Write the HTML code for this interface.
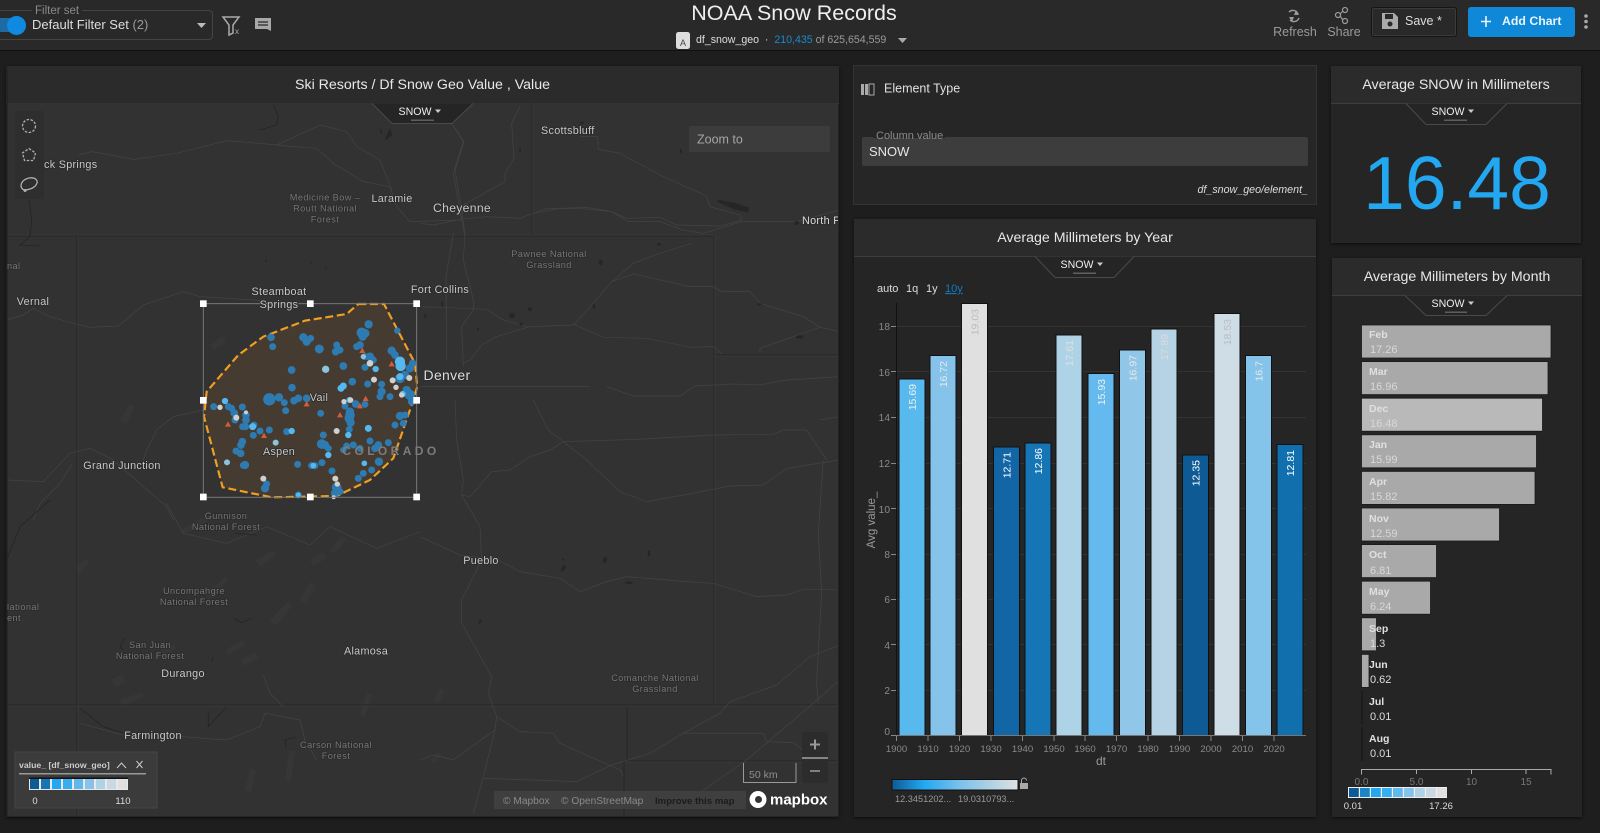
<!DOCTYPE html>
<html><head><meta charset="utf-8"><title>NOAA Snow Records</title>
<style>
html,body{margin:0;padding:0;width:1600px;height:833px;overflow:hidden;background:#1e1e1e;font-family:"Liberation Sans",sans-serif;color:#ddd}
#w{position:absolute;left:0;top:0;width:1600px;height:833px;overflow:hidden;filter:blur(.3px)}
.a{position:absolute}
.p{position:absolute;background:#252525;box-shadow:0 1px 3px rgba(0,0,0,.6)}
.t{position:absolute;left:0;right:0;top:0;height:37px;background:#2b2b2b;border-bottom:1px solid #3e3e3e;text-align:center;line-height:39px;font-size:14.2px;color:#e8e8e8}
svg{position:absolute;left:0;top:0}
svg text{font-family:"Liberation Sans",sans-serif}
.ml text{fill:#c8c8c8;font-size:10.8px;text-anchor:middle;dominant-baseline:central;paint-order:stroke;stroke:#2a2a2a;stroke-width:1.5px;letter-spacing:.3px}
.ml .g{fill:#767676;font-size:9.2px;letter-spacing:.4px}
.r{fill:none;stroke:#434343;stroke-width:2.2}
.w{fill:none;stroke:#232323;stroke-width:2.2}
.b{fill:#262626;stroke:none}
.bb line{stroke:#282828;stroke-width:1.2}
.ax{fill:#8a8a8a;font-size:10.2px}
.lb{font-size:10.5px;text-anchor:end}
.mo{font-size:10.5px;font-weight:bold;fill:#e0e0e0}
.mv{font-size:11px;fill:#ddd}
</style></head><body>
<div id="w">

<!-- header -->
<div class="a" style="left:0;top:0;width:1600px;height:50px;background:#292929;border-bottom:1px solid #111"></div>
<div class="a" style="left:-4px;top:10px;width:215px;height:28px;border:1px solid #444;border-radius:4px"></div>
<div class="a" style="left:32px;top:4px;padding:0 3px;background:#292929;font-size:11.5px;color:#8a8a8a;line-height:14px">Filter set</div>
<div class="a" style="left:32px;top:17px;font-size:13px;line-height:16px;color:#ddd;white-space:nowrap">Default Filter Set <span style="color:#9a9a9a">(2)</span></div>
<div class="a" style="left:0;top:18px;width:16px;height:14px;background:#1e6ba3"></div>
<div class="a" style="left:7px;top:16px;width:19px;height:19px;border-radius:50%;background:#0f8ae0"></div>
<div class="a" style="left:594px;top:0;width:400px;text-align:center;font-size:21.5px;line-height:27px;color:#eee">NOAA Snow Records</div>
<div class="a" style="left:696px;top:33px;font-size:10.6px;line-height:15px;color:#ddd;white-space:nowrap">df_snow_geo &nbsp;·&nbsp; <span style="color:#1a8ad0">210,435</span> <span style="color:#9a9a9a">of 625,654,559</span></div>
<div class="a" style="left:1273px;top:24px;width:44px;text-align:center;font-size:12.5px;line-height:16px;color:#999">Refresh</div>
<div class="a" style="left:1324px;top:24px;width:40px;text-align:center;font-size:12.5px;line-height:16px;color:#999">Share</div>
<div class="a" style="left:1371px;top:7px;width:84px;height:28px;border:1px solid #151515;border-radius:3px;box-shadow:0 0 0 1px #3a3a3a inset"></div>
<div class="a" style="left:1405px;top:13px;font-size:12.5px;line-height:16px;color:#ddd">Save *</div>
<div class="a" style="left:1468px;top:7px;width:107px;height:30px;border-radius:3px;background:#0f88d8"></div>
<div class="a" style="left:1502px;top:13px;font-size:12.3px;font-weight:bold;line-height:16px;color:#e8f4fc;white-space:nowrap">Add Chart</div>

<!-- panels -->
<div class="p" style="left:6px;top:66px;width:833px;height:751px"><div class="t">Ski Resorts / Df Snow Geo Value , Value</div></div>
<div class="p" style="left:854px;top:66px;width:462px;height:138px;background:#262626;box-shadow:0 0 0 1px #333"></div>
<div class="p" style="left:854px;top:219px;width:462px;height:598px"><div class="t">Average Millimeters by Year</div></div>
<div class="p" style="left:1331px;top:66px;width:250px;height:177px"><div class="t">Average SNOW in Millimeters</div></div>
<div class="p" style="left:1332px;top:258px;width:250px;height:559px"><div class="t">Average Millimeters by Month</div></div>

<svg width="1600" height="833" viewBox="0 0 1600 833">
<defs>
<clipPath id="mc"><rect x="7" y="103" width="831" height="713"/></clipPath>
<linearGradient id="lg" x1="0" x2="1" y1="0" y2="0"><stop offset="0" stop-color="#0e5a94"/><stop offset=".25" stop-color="#22a7f0"/><stop offset=".55" stop-color="#7fc2ea"/><stop offset="1" stop-color="#e0e0e0"/></linearGradient>
</defs>

<!-- header icons -->
<path d="M223 17H239L233 25V33L229 35V25Z" fill="none" stroke="#aaa" stroke-width="1.5"/>
<text x="235" y="34" font-size="8" fill="#aaa">x</text>
<path d="M255 18H271V31L267 29H255Z" fill="#a8a8a8"/><path d="M258 22H268M258 25H268" stroke="#292929" stroke-width="1.2"/>
<path d="M197 23H206L201.5 28Z" fill="#bbb"/>
<rect x="676" y="32" width="14" height="17" rx="2.5" fill="#ddd"/><text x="683" y="46" font-size="9" fill="#444" text-anchor="middle">A</text>
<path d="M898 38H907L902.5 43Z" fill="#aaa"/>
<path d="M1289 12A5.5 5.5 0 0 1 1298 14M1299 18A5.5 5.5 0 0 1 1290 20" fill="none" stroke="#999" stroke-width="1.5"/><path d="M1296 10L1299 15L1294 15ZM1292 22L1289 17L1294 17Z" fill="#999"/>
<circle cx="1338" cy="15" r="2.5" fill="none" stroke="#999" stroke-width="1.3"/><circle cx="1345" cy="10" r="2.5" fill="none" stroke="#999" stroke-width="1.3"/><circle cx="1345" cy="21" r="2.5" fill="none" stroke="#999" stroke-width="1.3"/><path d="M1340 14L1343 11M1340 16L1343 20" stroke="#999" stroke-width="1.2"/>
<path d="M1382 13H1394L1398 17V29H1382Z" fill="#aaa"/><rect x="1385" y="14" width="8" height="5" fill="#292929"/><circle cx="1390" cy="24" r="2.5" fill="#292929"/>
<path d="M1486 16V27M1481 21.500H1491" stroke="#eaf6ff" stroke-width="1.6"/>
<g fill="#aaa"><circle cx="1586" cy="16" r="1.800"/><circle cx="1586" cy="21.500" r="1.800"/><circle cx="1586" cy="27" r="1.800"/></g>

<!-- map -->
<g clip-path="url(#mc)">
<rect x="7" y="103" width="831" height="713" fill="#323232"/>
<!-- forest patches -->
<g fill="#363636">
<path d="M210 345l12-9 4 6-12 8zM120 420l10-16 5 3-9 17zM255 560l18-10 3 5-16 12zM270 620l18-18 4 4-16 20zM240 660l16-8 2 6-14 8zM300 600l10-18 6 4-10 18zM160 650l14-6 2 5-14 7zM310 560l14-8 3 6-14 8zM330 550l12-14 4 4-12 14zM110 680l12-6 4 8-10 5zM205 595l20-18 3 3-19 20zM180 530l25-14 3 5-25 14zM75 570l10-12 4 4-10 13zM120 700l22-8 2 5-22 9zM225 650l18-10 3 5-18 10zM360 715l7-22 5 2-7 22zM245 790l5-22 6 2-5 22zM285 780l4-30 6 1-4 30zM430 760l8-8 4 3-8 9zM434 700l6-12 5 3-6 12z"/>
</g>
<!-- borders -->
<g class="bb">
<line x1="7" y1="236" x2="714" y2="236"/><line x1="532" y1="103" x2="532" y2="236"/>
<line x1="77" y1="236" x2="77" y2="816"/><line x1="714" y1="236" x2="714" y2="705"/>
<line x1="7" y1="705" x2="838" y2="705"/><line x1="714" y1="355" x2="838" y2="355"/>
<line x1="627" y1="705" x2="627" y2="761"/><line x1="624" y1="761" x2="838" y2="761"/><line x1="624" y1="761" x2="624" y2="816"/>
</g>
<g stroke="#424242" stroke-width=".6">
<line x1="7" y1="235" x2="714" y2="235"/><line x1="533" y1="103" x2="533" y2="235"/><line x1="78" y1="236" x2="78" y2="816"/><line x1="715" y1="236" x2="715" y2="705"/><line x1="7" y1="706" x2="838" y2="706"/><line x1="714" y1="356" x2="838" y2="356"/><line x1="625" y1="762" x2="838" y2="762"/>
</g>
<!-- roads -->
<g transform="translate(0,0) scale(.3333)">
<polyline class="r" points="235,465 275,455 400,478 530,460 680,422 800,432 880,440 950,445 1000,490 1090,545 1170,560 1190,620 1230,665 1385,660"/>
<polyline class="r" points="830,435 960,375 1040,395 1070,440 1140,480 1175,570"/>
<polyline class="r" points="1355,370 1390,425 1360,520 1385,660 1395,710"/>
<polyline class="w" points="820,315 835,350 830,375 780,390"/><polyline class="w" points="88,600 95,660 90,710 60,735 120,738"/>
<path class="b" d="M1140 380l8 20-6 2zM1170 385l8 20-20 15-2-6z"/>
</g>
<g transform="translate(420,100) scale(.3333)">
<polyline class="r" points="300,20 275,70 282,175 255,220 255,245 130,315 125,355"/>
<polyline class="r" points="95,70 132,125 105,210 120,300 135,400 130,480 160,600 160,630 125,680 130,800"/>
<polyline class="r" points="0,370 40,375 125,358 200,350 300,355 380,325 480,325 575,335 625,365 720,365 790,390 850,400 965,365 1130,365 1260,330"/>
<polyline class="r" points="340,340 420,325 500,322 575,335 620,355 720,352 770,375 900,378 965,360"/>
<polyline class="r" points="480,110 533,110 535,148 600,160 730,230 860,288 870,320 960,345 965,365"/>
<polyline class="r" points="100,400 78,530 80,780"/>
<polyline class="r" points="815,430 720,460 640,490 575,545 520,610 460,675 330,680 230,710 185,735 150,780 130,790"/>
<polyline class="r" points="575,545 640,522 810,560 880,560 905,575 990,575 1020,610 1150,650 1200,682 1260,695"/>
<polyline class="r" points="460,672 550,712 680,715 810,742 880,740 905,762"/>
<polyline class="r" points="1020,760 1020,745 1200,682"/>
<polyline class="r" points="0,620 130,625 200,628 250,660 320,680"/>
<polyline class="r" points="0,860 510,860"/>
<polyline class="r" points="560,860 640,888 780,888 825,858 940,852 1020,855 1100,840 1260,830"/>
<path class="b" d="M892 298l50 10 45 15-2 14-40-8-50-22z"/>
<g class="b"><ellipse cx="486" cy="68" rx="6" ry="4"/><ellipse cx="783" cy="153" rx="3" ry="7"/><ellipse cx="300" cy="150" rx="3" ry="6"/><ellipse cx="717" cy="433" rx="6" ry="4"/><ellipse cx="542" cy="487" rx="6" ry="8"/><ellipse cx="522" cy="618" rx="4" ry="8"/><ellipse cx="276" cy="647" rx="9" ry="8"/><ellipse cx="330" cy="628" rx="6" ry="6"/><ellipse cx="304" cy="672" rx="6" ry="4"/><ellipse cx="174" cy="687" rx="3" ry="5"/><ellipse cx="1139" cy="711" rx="12" ry="5"/><ellipse cx="1018" cy="613" rx="8" ry="3"/><ellipse cx="1130" cy="369" rx="7" ry="6"/><ellipse cx="67" cy="612" rx="3" ry="8"/><ellipse cx="16" cy="648" rx="3" ry="7"/></g>
</g>
<g transform="translate(420,400) scale(.3333)">
<polyline class="r" points="340,0 385,90 430,125 650,118 880,105 1060,103 1090,90 1160,90 1220,180"/>
<polyline class="r" points="430,125 390,150 330,170 270,210 215,215 150,290 125,285"/>
<polyline class="r" points="430,125 500,180 600,275 680,305 790,285 930,258 1030,255 1100,205 1260,180"/>
<polyline class="r" points="0,410 120,465 235,480 300,515 420,535 480,575 560,545 620,530 800,545 880,550 1010,590 1100,585 1150,568 1260,570"/>
<polyline class="r" points="105,0 110,120 130,240 125,285 180,380 185,480 125,600 125,670 215,830 205,880 230,950 225,990 190,1130 160,1240"/>
<polyline class="r" points="1200,60 1260,50"/>
<polyline class="r" points="1260,735 1170,770 1070,855 930,905 900,940 790,1000 690,1060 575,1095 470,1145 190,1135"/>
<polyline class="r" points="230,950 300,995 400,1000 420,1030 600,1110 610,1130"/>
<polyline class="r" points="1210,180 1195,400 1205,580 1190,850 1195,910"/>
<polyline class="r" points="1260,840 1180,910 980,1080 780,1220"/>
<polyline class="r" points="790,1000 1030,1000 1040,1025 1120,1028 1160,1060"/>
<polyline class="r" points="225,990 100,1080 40,1065 0,1080"/>
<g class="b"><ellipse cx="430" cy="505" rx="5" ry="11" transform="rotate(30 430 505)"/><ellipse cx="429" cy="479" rx="3" ry="3"/><ellipse cx="555" cy="480" rx="6" ry="10" transform="rotate(20 555 480)"/><ellipse cx="627" cy="548" rx="12" ry="4"/><ellipse cx="687" cy="460" rx="4" ry="10"/><ellipse cx="180" cy="665" rx="3" ry="7" transform="rotate(30 180 665)"/></g>
</g>
<g transform="translate(0,220) scale(.3333)">
<polyline class="r" points="20,300 70,285 100,265 150,290 220,310 270,322 355,318 430,255 550,215 600,230 760,240 900,250"/>
<polyline class="r" points="20,780 130,785 210,700 270,685 340,720 430,800 500,860 520,900"/>
<polyline class="r" points="610,570 520,590 470,630 440,690 430,720"/>
<polyline class="r" points="215,735 180,790 120,850 100,900"/>
<g class="b"><ellipse cx="798" cy="122" rx="3" ry="3"/><ellipse cx="935" cy="128" rx="3" ry="3"/><ellipse cx="977" cy="145" rx="3" ry="2"/></g>
</g>
<g transform="translate(0,500) scale(.3333)">
<polyline class="r" points="500,10 550,100 680,130 800,80 930,135 990,80 1130,145 1260,95"/>
<polyline class="r" points="240,670 370,705"/>
<polyline class="r" points="545,710 680,720 780,680 795,640 900,660 915,720 950,780"/>
<polyline class="r" points="790,525 810,580 850,620"/>
<polyline class="w" points="20,180 60,80 150,0"/><polyline class="w" points="240,625 310,680 370,700"/><polyline class="w" points="625,635 625,680 680,620"/><polyline class="w" points="700,355 725,368 755,355"/><polyline class="w" points="860,745 855,720 885,712"/><polyline class="w" points="705,100 770,105"/><polyline class="w" points="375,415 360,440 370,450"/><polyline class="w" points="640,470 635,485"/>
</g>

<!-- selection -->
<g transform="translate(180,280) scale(.3333)">
<polygon points="535,72 612,72 705,250 712,320 695,375 640,535 570,600 470,648 275,652 128,622 72,410 80,335 175,225 250,170 375,122 500,102" fill="#453b31" stroke="#f0a020" stroke-width="6.500" stroke-dasharray="24 11"/>
<g fill="#2d7fb9" stroke="#2d7fb9" stroke-width="5" opacity=".95">
<circle cx="566" cy="133" r="10"/><circle cx="545" cy="158" r="13"/><circle cx="555" cy="160" r="11"/><circle cx="548" cy="170" r="10"/><circle cx="540" cy="195" r="9"/><circle cx="530" cy="200" r="8"/><circle cx="273" cy="172" r="9"/><circle cx="278" cy="200" r="8"/><circle cx="370" cy="172" r="10"/><circle cx="380" cy="185" r="10"/><circle cx="392" cy="175" r="8"/><circle cx="418" cy="207" r="11"/><circle cx="470" cy="195" r="8"/><circle cx="467" cy="215" r="9"/><circle cx="480" cy="210" r="8"/><circle cx="335" cy="270" r="9"/><circle cx="336" cy="323" r="9"/><circle cx="268" cy="358" r="16"/><circle cx="297" cy="352" r="10"/><circle cx="313" cy="368" r="8"/><circle cx="317" cy="392" r="8"/><circle cx="342" cy="362" r="9"/><circle cx="355" cy="355" r="9"/><circle cx="380" cy="355" r="9"/><circle cx="422" cy="400" r="8"/><circle cx="490" cy="258" r="9"/><circle cx="517" cy="305" r="9"/><circle cx="563" cy="312" r="8"/><circle cx="555" cy="262" r="8"/><circle cx="605" cy="313" r="8"/><circle cx="605" cy="335" r="10"/><circle cx="600" cy="350" r="8"/><circle cx="630" cy="350" r="8"/><circle cx="635" cy="212" r="10"/><circle cx="645" cy="225" r="9"/><circle cx="652" cy="152" r="7"/><circle cx="690" cy="265" r="10"/><circle cx="698" cy="250" r="9"/><circle cx="675" cy="285" r="10"/><circle cx="660" cy="295" r="12"/><circle cx="680" cy="330" r="10"/><circle cx="690" cy="345" r="13"/><circle cx="695" cy="365" r="9"/><circle cx="660" cy="408" r="10"/><circle cx="645" cy="435" r="8"/><circle cx="675" cy="405" r="8"/><circle cx="670" cy="430" r="8"/><circle cx="101" cy="380" r="8"/><circle cx="145" cy="380" r="8"/><circle cx="155" cy="385" r="8"/><circle cx="163" cy="400" r="9"/><circle cx="165" cy="420" r="8"/><circle cx="187" cy="381" r="8"/><circle cx="198" cy="405" r="9"/><circle cx="198" cy="420" r="9"/><circle cx="197" cy="440" r="8"/><circle cx="188" cy="440" r="8"/><circle cx="222" cy="435" r="8"/><circle cx="240" cy="453" r="8"/><circle cx="268" cy="450" r="8"/><circle cx="220" cy="466" r="8"/><circle cx="187" cy="485" r="9"/><circle cx="183" cy="495" r="9"/><circle cx="168" cy="513" r="8"/><circle cx="182" cy="520" r="9"/><circle cx="195" cy="555" r="10"/><circle cx="190" cy="556" r="8"/><circle cx="353" cy="553" r="8"/><circle cx="395" cy="557" r="8"/><circle cx="405" cy="557" r="8"/><circle cx="426" cy="548" r="8"/><circle cx="320" cy="455" r="8"/><circle cx="430" cy="465" r="8"/><circle cx="425" cy="492" r="12"/><circle cx="435" cy="495" r="10"/><circle cx="445" cy="505" r="8"/><circle cx="490" cy="510" r="7"/><circle cx="500" cy="498" r="8"/><circle cx="520" cy="495" r="8"/><circle cx="540" cy="505" r="8"/><circle cx="585" cy="505" r="9"/><circle cx="595" cy="495" r="9"/><circle cx="625" cy="488" r="8"/><circle cx="570" cy="483" r="8"/><circle cx="597" cy="545" r="10"/><circle cx="575" cy="570" r="8"/><circle cx="550" cy="580" r="8"/><circle cx="535" cy="595" r="8"/><circle cx="456" cy="573" r="8"/><circle cx="255" cy="625" r="10"/><circle cx="260" cy="612" r="8"/><circle cx="470" cy="622" r="12"/><circle cx="465" cy="640" r="10"/><circle cx="480" cy="635" r="8"/><circle cx="355" cy="645" r="8"/><circle cx="510" cy="405" r="12"/><circle cx="508" cy="415" r="12"/><circle cx="512" cy="428" r="10"/><circle cx="508" cy="448" r="8"/><circle cx="527" cy="372" r="9"/><circle cx="555" cy="373" r="8"/><circle cx="495" cy="378" r="8"/><circle cx="570" cy="230" r="10"/><circle cx="555" cy="230" r="8"/><circle cx="580" cy="240" r="8"/><circle cx="510" cy="395" r="10"/>
</g>
<g fill="#55b8f0" stroke="#55b8f0" stroke-width="3">
<circle cx="660" cy="245" r="14"/><circle cx="662" cy="258" r="14"/><circle cx="490" cy="318" r="9"/><circle cx="483" cy="325" r="9"/><circle cx="218" cy="440" r="9"/><circle cx="335" cy="453" r="8"/><circle cx="509" cy="360" r="8"/><circle cx="505" cy="465" r="8"/><circle cx="565" cy="445" r="9"/><circle cx="553" cy="550" r="7"/><circle cx="587" cy="267" r="8"/><circle cx="660" cy="290" r="9"/><circle cx="445" cy="525" r="8"/><circle cx="135" cy="363" r="8"/><circle cx="668" cy="342" r="8"/><circle cx="355" cy="645" r="6"/><circle cx="400" cy="557" r="7"/></g>
<g fill="#8cc4dc" stroke="#8cc4dc" stroke-width="2"><circle cx="287" cy="488" r="8"/><circle cx="141" cy="547" r="8"/><circle cx="437" cy="268" r="10"/><circle cx="550" cy="230" r="7"/></g>
<g fill="#d0d0d0" stroke="#d0d0d0" stroke-width="2"><circle cx="470" cy="453" r="8"/><circle cx="582" cy="299" r="8"/><circle cx="638" cy="301" r="8"/><circle cx="688" cy="294" r="8"/><circle cx="492" cy="365" r="7"/><circle cx="512" cy="360" r="7"/><circle cx="250" cy="596" r="8"/><circle cx="466" cy="596" r="8"/><circle cx="472" cy="612" r="7"/><circle cx="570" cy="250" r="9"/><circle cx="169" cy="413" r="8"/><circle cx="120" cy="382" r="7"/><circle cx="198" cy="397" r="5"/><circle cx="665" cy="345" r="7"/><circle cx="461" cy="652" r="5"/><circle cx="648" cy="322" r="7"/></g>
<g fill="#d45b3c"><path d="M547 203l9 16h-18z"/><path d="M635 243l9 16h-18z"/><path d="M557 347l9 16h-18z"/><path d="M540 369l9 16h-18z"/><path d="M480 396l9 16h-18z"/><path d="M380 363l9 16h-18z"/><path d="M252 458l9 16h-18z"/><path d="M144 424l9 16h-18z"/></g>
<rect x="70" y="71" width="640" height="581" fill="none" stroke="#777" stroke-width="3"/>
<g fill="#fff"><rect x="60" y="61" width="20" height="20"/><rect x="381" y="61" width="20" height="20"/><rect x="700" y="61" width="20" height="20"/><rect x="60" y="351" width="20" height="20"/><rect x="700" y="351" width="20" height="20"/><rect x="60" y="641" width="20" height="20"/><rect x="381" y="641" width="20" height="20"/><rect x="700" y="641" width="20" height="20"/></g>
</g>

<!-- map labels -->
<g class="ml">
<text x="44" y="165" style="text-anchor:start">ck Springs</text>
<text class="g" x="325" y="197.500">Medicine Bow –</text><text class="g" x="325" y="208.500">Routt National</text><text class="g" x="325" y="219.500">Forest</text>
<text x="392" y="199">Laramie</text>
<text x="462" y="208" style="font-size:12.200px">Cheyenne</text>
<text x="541" y="131" style="text-anchor:start">Scottsbluff</text>
<text x="802" y="221" style="text-anchor:start;fill:#ddd">North P</text>
<text class="g" x="549" y="254">Pawnee National</text><text class="g" x="549" y="265">Grassland</text>
<text x="440" y="290">Fort Collins</text>
<text x="447" y="375" style="font-size:14px;fill:#ddd">Denver</text>
<text x="279" y="292">Steamboat</text><text x="279" y="305">Springs</text>
<text x="33" y="302">Vernal</text>
<text x="122" y="466">Grand Junction</text>
<text x="319" y="398">Vail</text><text x="279" y="452">Aspen</text>
<text x="391" y="451" style="font-size:12px;font-weight:bold;letter-spacing:3.400px;fill:#7c7c7c;stroke:none">COLORADO</text>
<text class="g" x="226" y="516">Gunnison</text><text class="g" x="226" y="527">National Forest</text>
<text class="g" x="7" y="266" style="text-anchor:start">nal</text>
<text class="g" x="7" y="607" style="text-anchor:start">lational</text><text class="g" x="7" y="618" style="text-anchor:start">ent</text>
<text class="g" x="194" y="591">Uncompahgre</text><text class="g" x="194" y="602">National Forest</text>
<text class="g" x="150" y="645">San Juan</text><text class="g" x="150" y="656">National Forest</text>
<text x="183" y="674">Durango</text><text x="366" y="651.500">Alamosa</text><text x="481" y="561">Pueblo</text>
<text class="g" x="655" y="678">Comanche National</text><text class="g" x="655" y="689">Grassland</text>
<text x="153" y="736">Farmington</text>
<text class="g" x="336" y="745">Carson National</text><text class="g" x="336" y="756">Forest</text>
</g>
</g>
<rect x="6.500" y="66.500" width="1" height="750" fill="#1c1c1c"/>

<!-- map tools -->
<rect x="15" y="111" width="29" height="88" fill="#2e2e2e"/>
<g fill="none" stroke="#b0b0b0" stroke-width="1.300" stroke-dasharray="2.500 1.500">
<circle cx="29" cy="126" r="6.500"/><path d="M29 148.500l6.500 4.500-2 7.500h-9l-2-7.500z"/>
<path d="M24 190c-5-2-4-10 5-12 7-1 10 3 7 7-2 3-7 5-12 5z" stroke-dasharray="none"/></g>
<circle cx="25" cy="190.500" r="1.500" fill="#b0b0b0"/>

<!-- snow tabs -->
<g fill="#252525" stroke="#4a4a4a">
<path d="M372 103.500L392 123.500H452L473 103.500"/>
<path d="M1035 256.500L1055 277.500H1114L1134 256.500"/>
<path d="M1406 103.500L1426 124.500H1486L1507 103.500"/>
<path d="M1405 295.500L1426 315.500H1486L1507 295.500"/>
</g>
<g fill="#eee" font-size="10.600" text-anchor="middle"><text x="415" y="115">SNOW</text><text x="1077" y="268">SNOW</text><text x="1448" y="115">SNOW</text><text x="1448" y="307">SNOW</text></g>
<g fill="#ccc"><path d="M435 109.500h6l-3 3.500z"/><path d="M1097 262.500h6l-3 3.500z"/><path d="M1468 109.500h6l-3 3.500z"/><path d="M1468 301.500h6l-3 3.500z"/></g>
<g fill="#5e5e5e"><rect x="411" y="119.500" width="23" height="1.500"/><rect x="1073" y="272.500" width="23" height="1.500"/><rect x="1444" y="119.500" width="23" height="1.500"/><rect x="1445" y="311.500" width="22" height="1.500"/></g>

<!-- zoom to -->
<rect x="689" y="126" width="141" height="26" fill="#3c3c3c"/>
<text x="697" y="143.500" font-size="12.500" fill="#a5a5a5">Zoom to</text>

<!-- map legend -->
<rect x="15" y="752" width="142" height="56" fill="#3b3b3b" stroke="#464646"/>
<text x="19" y="768" font-size="8.700" font-weight="bold" fill="#ccc">value_ [df_snow_geo]</text>
<path d="M117 768l4.500-5 4.500 5" fill="none" stroke="#ccc"/><path d="M136.500 761l6 7m0-7l-6 7" stroke="#ccc"/>
<rect x="19" y="773" width="127" height="1.500" fill="#999"/>
<rect x="29" y="777.500" width="99" height="2" fill="#111"/>
<rect x="29" y="779" width="99" height="11" fill="#e8e8e8"/>
<g><rect x="30" y="779" width="9" height="10" fill="#0e5a94"/><rect x="41" y="779" width="9" height="10" fill="#1575b5"/><rect x="52" y="779" width="9" height="10" fill="#22a7f0"/><rect x="63" y="779" width="9" height="10" fill="#3aaeec"/><rect x="74" y="779" width="9" height="10" fill="#5fb9ee"/><rect x="85" y="779" width="9" height="10" fill="#85c3ea"/><rect x="96" y="779" width="9" height="10" fill="#aed2e6"/><rect x="107" y="779" width="9" height="10" fill="#c8d9e4"/><rect x="118" y="779" width="9" height="10" fill="#e0e0e0"/></g>
<text x="35" y="804" font-size="9.500" fill="#ddd" text-anchor="middle">0</text>
<text x="123" y="804" font-size="9.500" fill="#ddd" text-anchor="middle">110</text>

<!-- zoom ctrl, scale, attribution -->
<rect x="802" y="732" width="26" height="51" rx="3" fill="#2c2c2c"/>
<rect x="802" y="757.500" width="26" height="1" fill="#ddd"/>
<path d="M815 739.500v10M810 744.500h10" stroke="#999" stroke-width="2"/>
<path d="M810 771h10" stroke="#808080" stroke-width="2"/>
<path d="M743.500 763v19.500h52.500V763" fill="none" stroke="#999"/>
<text x="749" y="778" font-size="10.500" fill="#8f8f8f">50 km</text>
<rect x="494" y="791" width="252" height="18" fill="#3f3f3f"/>
<text x="503" y="804" font-size="10.200" fill="#8a8a8a">© Mapbox</text>
<text x="561" y="804" font-size="10.200" fill="#8a8a8a">© OpenStreetMap</text>
<text x="655" y="804" font-size="9.600" font-weight="bold" fill="#1c1c1c">Improve this map</text>
<circle cx="758" cy="799.500" r="8.500" fill="#fff"/><circle cx="758.500" cy="799.500" r="3.500" fill="#333"/>
<text x="770" y="804.500" font-size="15" font-weight="bold" fill="#fff">mapbox</text>

<!-- element panel -->
<g fill="#aaa"><rect x="861" y="84" width="3" height="11"/><rect x="865" y="84" width="3" height="11"/><rect x="869" y="84" width="5" height="11" fill="none" stroke="#aaa"/></g>
<text x="884" y="92.500" font-size="12.500" fill="#e0e0e0">Element Type</text>
<rect x="862" y="137" width="446" height="29" rx="2" fill="#3d3d3d"/>
<rect x="873" y="130" width="72" height="8" fill="#262626"/>
<text x="876" y="139" font-size="11" fill="#8a8a8a">Column value</text>
<text x="869" y="156" font-size="13" fill="#e5e5e5">SNOW</text>
<text x="1308" y="193" font-size="10.700" font-style="italic" fill="#ddd" text-anchor="end">df_snow_geo/element_</text>

<!-- kpi -->
<text x="1457" y="209" font-size="75" fill="#22a7f0" text-anchor="middle">16.48</text>

<!-- year chart -->
<g font-size="11" fill="#ddd"><text x="877" y="292">auto</text><text x="906" y="292">1q</text><text x="926" y="292">1y</text><text x="945" y="292" fill="#1679bd" text-decoration="underline">10y</text></g>
<g stroke="#333" stroke-width="1"><line x1="896" y1="690.500" x2="1306" y2="690.500"/><line x1="896" y1="644.500" x2="1306" y2="644.500"/><line x1="896" y1="599.500" x2="1306" y2="599.500"/><line x1="896" y1="554.500" x2="1306" y2="554.500"/><line x1="896" y1="508.500" x2="1306" y2="508.500"/><line x1="896" y1="463.500" x2="1306" y2="463.500"/><line x1="896" y1="417.500" x2="1306" y2="417.500"/><line x1="896" y1="371.500" x2="1306" y2="371.500"/><line x1="896" y1="326.500" x2="1306" y2="326.500"/></g>
<g stroke-width="1" stroke="#111">
<rect x="899" y="379" width="26" height="356.500" fill="#58b9ef"/>
<rect x="930" y="355.500" width="26" height="380" fill="#85c3ea"/>
<rect x="961.500" y="303.500" width="26" height="432" fill="#e0e0e0"/>
<rect x="993.500" y="447" width="26" height="288.500" fill="#1366a5"/>
<rect x="1025" y="443" width="26" height="292.500" fill="#1575b5"/>
<rect x="1056" y="335" width="26" height="400.500" fill="#aed2e6"/>
<rect x="1088" y="373.500" width="26" height="362" fill="#64baee"/>
<rect x="1119.500" y="350" width="26" height="385.500" fill="#90c6e8"/>
<rect x="1151" y="329" width="26" height="406.500" fill="#b6d2e5"/>
<rect x="1182.500" y="455" width="26" height="280.500" fill="#0e5a94"/>
<rect x="1214" y="313.500" width="26" height="422" fill="#cfdde6"/>
<rect x="1245.500" y="355.500" width="26" height="380" fill="#84c3ea"/>
<rect x="1277" y="444.500" width="26" height="291" fill="#116fae"/>
</g>
<g class="lb" fill="#f0f0f0">
<text transform="translate(916,384) rotate(-90)" text-anchor="end">15.69</text>
<text transform="translate(947,361) rotate(-90)" text-anchor="end" fill="#e8e8e8">16.72</text>
<text transform="translate(978.500,309) rotate(-90)" text-anchor="end" fill="#bcbcbc">19.03</text>
<text transform="translate(1010.500,452) rotate(-90)" text-anchor="end" fill="#fff">12.71</text>
<text transform="translate(1042,448) rotate(-90)" text-anchor="end" fill="#fff">12.86</text>
<text transform="translate(1073,340) rotate(-90)" text-anchor="end" fill="#e0e0e0">17.61</text>
<text transform="translate(1105,379) rotate(-90)" text-anchor="end">15.93</text>
<text transform="translate(1136.500,355) rotate(-90)" text-anchor="end" fill="#e8e8e8">16.97</text>
<text transform="translate(1168,334) rotate(-90)" text-anchor="end" fill="#dcdcdc">17.89</text>
<text transform="translate(1199.500,460) rotate(-90)" text-anchor="end" fill="#fff">12.35</text>
<text transform="translate(1231,319) rotate(-90)" text-anchor="end" fill="#b8bec2">18.53</text>
<text transform="translate(1262.500,361) rotate(-90)" text-anchor="end" fill="#e8e8e8">16.7</text>
<text transform="translate(1294,450) rotate(-90)" text-anchor="end" fill="#fff">12.81</text>
</g>
<path d="M896.500 303V735.500H1306" fill="none" stroke="#777"/>
<path d="M896.500 303V735" fill="none" stroke="#111"/>
<g stroke="#888"><path d="M891 735.500h5M891 690.500h5M891 644.500h5M891 599.500h5M891 554.500h5M891 508.500h5M891 463.500h5M891 417.500h5M891 371.500h5M891 326.500h5"/>
<path d="M896.500 736v5M928 736v5M959.500 736v5M991 736v5M1022.500 736v5M1054 736v5M1085 736v5M1116.500 736v5M1148 736v5M1179.500 736v5M1211 736v5M1242.500 736v5M1274 736v5"/></g>
<g class="ax" text-anchor="end"><text x="890" y="735">0</text><text x="890" y="694">2</text><text x="890" y="649">4</text><text x="890" y="603">6</text><text x="890" y="558">8</text><text x="890" y="513">10</text><text x="890" y="467">12</text><text x="890" y="421">14</text><text x="890" y="376">16</text><text x="890" y="330">18</text></g>
<g class="ax" text-anchor="middle" style="font-size:9.600px"><text x="896.500" y="752">1900</text><text x="928" y="752">1910</text><text x="959.500" y="752">1920</text><text x="991" y="752">1930</text><text x="1022.500" y="752">1940</text><text x="1054" y="752">1950</text><text x="1085" y="752">1960</text><text x="1116.500" y="752">1970</text><text x="1148" y="752">1980</text><text x="1179.500" y="752">1990</text><text x="1211" y="752">2000</text><text x="1242.500" y="752">2010</text><text x="1274" y="752">2020</text></g>
<text x="1101" y="765" font-size="12" fill="#999" text-anchor="middle">dt</text>
<text transform="translate(875,520) rotate(-90)" font-size="11.500" fill="#999" text-anchor="middle">Avg value_</text>
<rect x="892" y="779.500" width="126" height="10.500" fill="url(#lg)" stroke="#111"/>
<text x="895" y="802" font-size="9.200" fill="#999">12.3451202...</text><text x="958" y="802" font-size="9.200" fill="#999">19.0310793...</text>
<rect x="1020" y="783" width="8" height="6" fill="#aaa"/><path d="M1021.500 783v-2.500a2.500 2.500 0 0 1 5 0" fill="none" stroke="#aaa"/>

<!-- month chart -->
<g fill="#a9a9a9" stroke="#1a1a1a" stroke-width=".8">
<rect x="1361.500" y="325" width="189.500" height="33"/>
<rect x="1361.500" y="361.600" width="186.500" height="33"/>
<rect x="1361.500" y="398.200" width="181" height="33" fill="#b9b9b9"/>
<rect x="1361.500" y="434.800" width="175" height="33"/>
<rect x="1361.500" y="471.400" width="173.500" height="33"/>
<rect x="1361.500" y="508" width="138" height="33"/>
<rect x="1361.500" y="544.600" width="75" height="33"/>
<rect x="1361.500" y="581.200" width="69" height="33"/>
<rect x="1361.500" y="617.800" width="15" height="33"/>
<rect x="1361.500" y="654.400" width="7.500" height="33"/>
<rect x="1361.500" y="691" width="1" height="33" fill="#333"/>
<rect x="1361.500" y="727.600" width="1" height="33" fill="#333"/>
</g>
<g class="mo"><text x="1369" y="338">Feb</text><text x="1369" y="375">Mar</text><text x="1369" y="412">Dec</text><text x="1369" y="448">Jan</text><text x="1369" y="485">Apr</text><text x="1369" y="522">Nov</text><text x="1369" y="558">Oct</text><text x="1369" y="595">May</text><text x="1369" y="632">Sep</text><text x="1369" y="668">Jun</text><text x="1369" y="705">Jul</text><text x="1369" y="742">Aug</text></g>
<g class="mv"><text x="1370" y="353" fill="#d8d8d8">17.26</text><text x="1370" y="390" fill="#d8d8d8">16.96</text><text x="1370" y="427" fill="#d8d8d8">16.48</text><text x="1370" y="463" fill="#d8d8d8">15.99</text><text x="1370" y="500" fill="#d8d8d8">15.82</text><text x="1370" y="537" fill="#d8d8d8">12.59</text><text x="1370" y="574" fill="#d8d8d8">6.81</text><text x="1370" y="610" fill="#d8d8d8">6.24</text><text x="1370" y="647" fill="#d8d8d8">1.3</text><text x="1370" y="683">0.62</text><text x="1370" y="720">0.01</text><text x="1370" y="757">0.01</text></g>
<path d="M1361.500 774.500V769.500H1551V774.500M1416.500 770v4M1471.500 770v4M1526 770v4" fill="none" stroke="#aaa"/>
<g font-size="10" fill="#777" text-anchor="middle"><text x="1361.500" y="785">0.0</text><text x="1416.500" y="785">5.0</text><text x="1471.500" y="785">10</text><text x="1526" y="785">15</text></g>
<rect x="1348" y="787" width="99" height="11" fill="#eee"/>
<g><rect x="1349" y="788" width="9.800" height="9" fill="#0e5a94"/><rect x="1360" y="788" width="9.800" height="9" fill="#1a85c8"/><rect x="1371" y="788" width="9.800" height="9" fill="#22a7f0"/><rect x="1382" y="788" width="9.800" height="9" fill="#3aaeec"/><rect x="1393" y="788" width="9.800" height="9" fill="#5fb9ee"/><rect x="1404" y="788" width="9.800" height="9" fill="#85c3ea"/><rect x="1415" y="788" width="9.800" height="9" fill="#aed2e6"/><rect x="1426" y="788" width="9.800" height="9" fill="#c8d9e4"/><rect x="1437" y="788" width="9.800" height="9" fill="#e0e0e0"/></g>
<text x="1353" y="809" font-size="9.500" fill="#ddd" text-anchor="middle">0.01</text>
<text x="1441" y="809" font-size="9.500" fill="#ddd" text-anchor="middle">17.26</text>
</svg>
</div>
</body></html>
